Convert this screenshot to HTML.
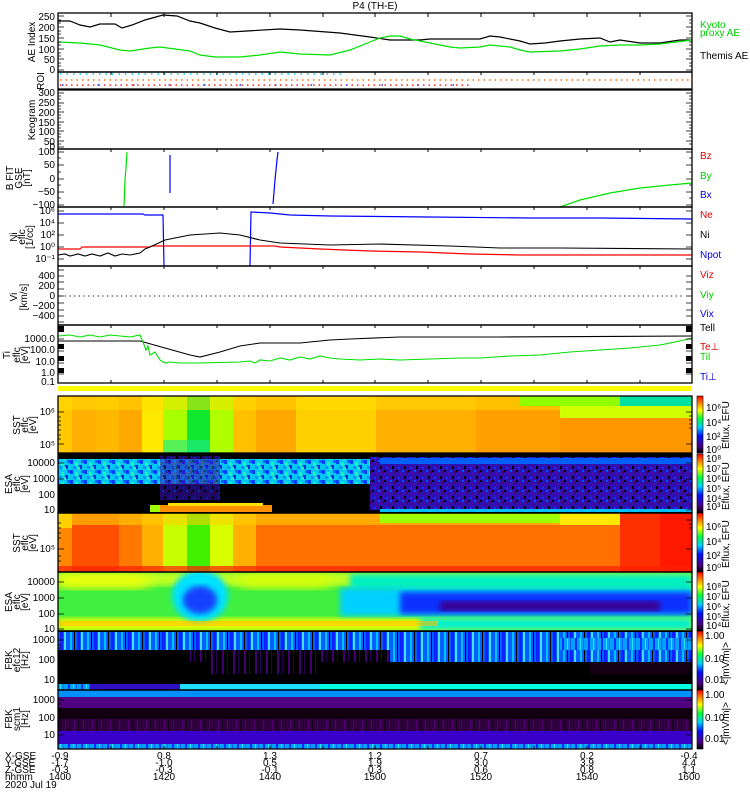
<!DOCTYPE html>
<html><head><meta charset="utf-8"><style>
html,body{margin:0;padding:0;background:#fff;width:750px;height:800px;overflow:hidden}
svg{display:block}
text{font-family:"Liberation Sans",sans-serif;font-size:10px}
.s{font-size:9px}
</style></head><body>
<svg width="750" height="800" viewBox="0 0 750 800" xmlns="http://www.w3.org/2000/svg">
<defs>
<linearGradient id="cb" x1="0" y1="1" x2="0" y2="0">
<stop offset="0" stop-color="#000"/><stop offset="0.12" stop-color="#4b0080"/><stop offset="0.3" stop-color="#0010ff"/><stop offset="0.45" stop-color="#00d0ff"/><stop offset="0.6" stop-color="#00ff40"/><stop offset="0.75" stop-color="#ffff00"/><stop offset="0.88" stop-color="#ff8000"/><stop offset="1" stop-color="#ff0000"/>
</linearGradient>
<pattern id="n1" width="14" height="10" patternUnits="userSpaceOnUse">
<rect width="14" height="10" fill="#00c8f0"/><rect x="0" y="0" width="3" height="4" fill="#0040ff"/><rect x="5" y="2" width="3" height="4" fill="#20f0b0"/><rect x="9" y="5" width="3" height="4" fill="#0030e0"/><rect x="3" y="6" width="3" height="3" fill="#0090ff"/><rect x="11" y="0" width="3" height="3" fill="#1060ff"/><rect x="7" y="7" width="3" height="3" fill="#30e0c0"/>
</pattern>
<pattern id="n2" width="12" height="10" patternUnits="userSpaceOnUse">
<rect width="12" height="10" fill="#3010b0"/><rect x="0" y="0" width="2" height="2" fill="#000"/><rect x="4" y="3" width="2" height="2" fill="#5a0090"/><rect x="8" y="6" width="2" height="3" fill="#000"/><rect x="2" y="7" width="2" height="2" fill="#1030ff"/><rect x="10" y="1" width="2" height="3" fill="#4a0070"/><rect x="6" y="0" width="2" height="2" fill="#0050ff"/>
</pattern>
<pattern id="st1" width="17" height="10" patternUnits="userSpaceOnUse">
<rect width="17" height="10" fill="#0060ff"/><rect x="2" width="2" height="10" fill="#00c0ff"/><rect x="6" width="1" height="10" fill="#000"/><rect x="9" width="3" height="10" fill="#1020ff"/><rect x="13" width="2" height="10" fill="#40e0ff"/>
</pattern>
<pattern id="st2" width="13" height="10" patternUnits="userSpaceOnUse">
<rect width="13" height="10" fill="#00a0ff"/><rect x="3" width="2" height="10" fill="#0030ff"/><rect x="8" width="1" height="10" fill="#30e0ff"/><rect x="11" width="1" height="10" fill="#1060ff"/>
</pattern>
<pattern id="st3" width="9" height="10" patternUnits="userSpaceOnUse">
<rect width="9" height="10" fill="#300040"/><rect x="2" width="1" height="10" fill="#500070"/><rect x="6" width="1" height="10" fill="#180020"/>
</pattern>
<pattern id="st4" width="11" height="10" patternUnits="userSpaceOnUse">
<rect width="11" height="10" fill="#000"/><rect x="2" width="2" height="10" fill="#400070"/><rect x="7" width="1" height="10" fill="#2a0050"/>
</pattern>
<filter id="bl"><feGaussianBlur stdDeviation="8"/></filter>
<filter id="bl2"><feGaussianBlur stdDeviation="3"/></filter>
<clipPath id="c12"><rect x="58" y="572" width="634" height="59"/></clipPath>
</defs>

<text x="375" y="9" text-anchor="middle">P4 (TH-E)</text>

<rect x="58" y="386" width="634" height="5" fill="#ffff00"/>
<!-- SST1 -->
<g>
<rect x="58" y="396" width="634" height="57" fill="#ffc000"/>
<rect x="58" y="396" width="14" height="57" fill="#ffc800"/>
<rect x="72" y="396" width="24" height="57" fill="#ffb000"/>
<rect x="96" y="396" width="23" height="57" fill="#ffb800"/>
<rect x="119" y="396" width="23" height="57" fill="#ffa800"/>
<rect x="142" y="396" width="21" height="57" fill="#ffe800"/>
<rect x="163" y="396" width="24" height="57" fill="#a8ff00"/>
<rect x="187" y="396" width="23" height="57" fill="#10e830"/>
<rect x="210" y="396" width="23" height="57" fill="#b0ff00"/>
<rect x="233" y="396" width="23" height="57" fill="#ffc000"/>
<rect x="256" y="396" width="40" height="57" fill="#ffa800"/>
<rect x="296" y="396" width="80" height="57" fill="#ffd000"/>
<rect x="376" y="396" width="100" height="57" fill="#ffb000"/>
<rect x="476" y="396" width="84" height="57" fill="#ffa000"/>
<rect x="560" y="396" width="132" height="57" fill="#ff9800"/>
<rect x="58" y="396" width="634" height="14" fill="#ffe000" opacity="0.5"/>
<rect x="520" y="396" width="172" height="10" fill="#90ff00"/>
<rect x="620" y="396" width="72" height="10" fill="#00e0a0"/>
<rect x="560" y="406" width="132" height="12" fill="#d0ff00"/>
<rect x="163" y="440" width="47" height="13" fill="#20e890" opacity="0.6"/>
</g>
<!-- ESA1 -->
<rect x="58" y="454" width="634" height="59" fill="#000"/>
<rect x="58" y="459" width="330" height="25" fill="url(#n1)"/>
<rect x="160" y="456" width="60" height="44" fill="url(#n2)" opacity="0.6"/>
<rect x="370" y="457" width="322" height="53" fill="url(#n2)"/>
<rect x="380" y="458" width="312" height="6" fill="#0060ff"/>
<rect x="380" y="509" width="312" height="3" fill="#00c0ff"/>
<rect x="150" y="505" width="122" height="7" fill="#ff9000"/>
<rect x="168" y="503" width="95" height="3" fill="#ffe000"/>
<rect x="150" y="505" width="10" height="7" fill="#a0ff00"/>
<!-- SST2 -->
<g>
<rect x="58" y="513" width="634" height="59" fill="#ff7000"/>
<rect x="58" y="513" width="14" height="59" fill="#ff8800"/>
<rect x="58" y="513" width="14" height="15" fill="#ffd000"/>
<rect x="72" y="513" width="47" height="59" fill="#ff5000"/>
<rect x="119" y="513" width="23" height="59" fill="#ff7800"/>
<rect x="142" y="513" width="21" height="59" fill="#ffb000"/>
<rect x="163" y="513" width="24" height="59" fill="#c8ff00"/>
<rect x="187" y="513" width="23" height="59" fill="#40f000"/>
<rect x="210" y="513" width="23" height="59" fill="#d8ff00"/>
<rect x="233" y="513" width="23" height="59" fill="#ffb000"/>
<rect x="58" y="513" width="634" height="12" fill="#ffd000" opacity="0.6"/>
<rect x="380" y="513" width="180" height="10" fill="#a0ff00"/>
<rect x="560" y="513" width="60" height="12" fill="#ffe800"/>
<rect x="620" y="513" width="72" height="59" fill="#ff3000"/>
<rect x="660" y="513" width="32" height="59" fill="#ff1800"/>
<rect x="58" y="566" width="634" height="6" fill="#ff2000" opacity="0.7"/>
</g>
<!-- ESA2 -->
<g clip-path="url(#c12)">
<rect x="58" y="572" width="634" height="59" fill="#40f040"/>
<rect x="58" y="572" width="634" height="14" fill="#c0ff20" filter="url(#bl2)"/>
<rect x="58" y="618" width="634" height="13" fill="#e8ff00" filter="url(#bl2)"/>
<rect x="350" y="574" width="342" height="16" fill="#00f0c0" filter="url(#bl2)"/>
<rect x="340" y="588" width="352" height="28" fill="#00d0ff" filter="url(#bl2)"/>
<rect x="400" y="592" width="292" height="22" fill="#1030ff" filter="url(#bl2)"/>
<rect x="440" y="601" width="220" height="10" fill="#3a0090" filter="url(#bl2)"/>
<rect x="420" y="618" width="272" height="12" fill="#00f0d0" filter="url(#bl2)"/>
<rect x="58" y="575" width="90" height="14" fill="#ffff00" filter="url(#bl)"/>
<rect x="240" y="575" width="90" height="14" fill="#e0ff00" filter="url(#bl)"/>
<ellipse cx="200" cy="596" rx="28" ry="26" fill="#00e0ff" filter="url(#bl2)"/>
<ellipse cx="200" cy="600" rx="17" ry="14" fill="#1840ff" filter="url(#bl2)"/>
<rect x="58" y="621" width="380" height="5" fill="#ffc000" opacity="0.6"/>
</g>
<!-- FBK1 -->
<rect x="58" y="631" width="634" height="59" fill="#000"/>
<rect x="58" y="632" width="634" height="6" fill="url(#st1)"/>
<rect x="58" y="638" width="634" height="12" fill="url(#st1)"/>
<rect x="560" y="638" width="132" height="12" fill="url(#st2)"/>
<rect x="190" y="650" width="200" height="12" fill="url(#st4)"/>
<rect x="390" y="650" width="302" height="12" fill="url(#st1)"/>
<rect x="210" y="662" width="110" height="12" fill="url(#st4)"/>
<rect x="590" y="662" width="100" height="12" fill="#150015"/>
<rect x="58" y="684" width="634" height="6" fill="url(#st2)"/>
<rect x="180" y="684" width="140" height="6" fill="#20e0ff"/>
<rect x="320" y="684" width="372" height="6" fill="#00ffe0"/>
<rect x="90" y="684" width="90" height="6" fill="#3010c0"/>
<!-- FBK2 -->
<rect x="58" y="690" width="634" height="7" fill="#0090ff"/>
<rect x="58" y="697" width="634" height="11" fill="#500080"/>
<rect x="58" y="708" width="634" height="11" fill="#100010"/>
<rect x="58" y="719" width="634" height="12" fill="url(#st3)"/>
<rect x="58" y="731" width="634" height="13" fill="#3800c8"/>
<rect x="58" y="744" width="634" height="5" fill="url(#st2)"/>

<!-- colorbars -->
<rect x="697" y="396" width="6" height="57" fill="url(#cb)" stroke="#000" stroke-width="0.6"/>
<rect x="697" y="454" width="6" height="59" fill="url(#cb)" stroke="#000" stroke-width="0.6"/>
<rect x="697" y="513" width="6" height="59" fill="url(#cb)" stroke="#000" stroke-width="0.6"/>
<rect x="697" y="572" width="6" height="59" fill="url(#cb)" stroke="#000" stroke-width="0.6"/>
<rect x="697" y="631" width="6" height="59" fill="url(#cb)" stroke="#000" stroke-width="0.6"/>
<rect x="697" y="690" width="6" height="59" fill="url(#cb)" stroke="#000" stroke-width="0.6"/>
<g>
<text x="706" y="411" font-size="7">10⁶</text><text x="706" y="426" font-size="7">10⁴</text><text x="706" y="440" font-size="7">10²</text><text x="706" y="453" font-size="7">10⁰</text>
<text x="706" y="462" font-size="7">10⁸</text><text x="706" y="472" font-size="7">10⁷</text><text x="706" y="482" font-size="7">10⁶</text><text x="706" y="492" font-size="7">10⁵</text><text x="706" y="502" font-size="7">10⁴</text><text x="706" y="510" font-size="7">10³</text>
<text x="706" y="530" font-size="7">10⁶</text><text x="706" y="545" font-size="7">10⁴</text><text x="706" y="559" font-size="7">10²</text><text x="706" y="571" font-size="7">10⁰</text>
<text x="706" y="590" font-size="7">10⁸</text><text x="706" y="600" font-size="7">10⁷</text><text x="706" y="610" font-size="7">10⁶</text><text x="706" y="620" font-size="7">10⁵</text><text x="706" y="629" font-size="7">10⁴</text>
<text x="705" y="639" font-size="7">1.00</text><text x="705" y="662" font-size="7">0.10</text><text x="705" y="683" font-size="7">0.01</text>
<text x="705" y="698" font-size="7">1.00</text><text x="705" y="721" font-size="7">0.10</text><text x="705" y="742" font-size="7">0.01</text>
</g>
<g>
<text transform="translate(729,449) rotate(-90)" font-size="8">Eflux, EFU</text>
<text transform="translate(729,510) rotate(-90)" font-size="8">Eflux, EFU</text>
<text transform="translate(729,568) rotate(-90)" font-size="8">Eflux, EFU</text>
<text transform="translate(729,628) rotate(-90)" font-size="8">Eflux, EFU</text>
<text transform="translate(729,685) rotate(-90)" font-size="8">&lt;|mV/m|&gt;</text>
<text transform="translate(729,745) rotate(-90)" font-size="8">&lt;|mV/m|&gt;</text>
</g>

<!-- Line plots -->
<g fill="none" stroke-width="1.2">
<polyline stroke="#000" points="58,21 70,21 80,25 90,27 100,24 115,24 122,28 132,25 145,20 163,15 177,16 190,21 200,23 215,28 230,32 247,31 280,29 300,30 340,33 370,37 390,40 420,40 430,39 480,39 490,36 500,37 520,41 530,44 545,43 560,41 580,39 600,38 610,42 620,40 640,43 660,43 680,40 692,40"/>
<polyline stroke="#00e000" points="58,42 80,43 100,45 120,50 130,51 150,48 160,47 175,49 190,51 200,55 215,57 240,57 260,55 280,52 300,54 330,55 350,50 370,42 380,38 390,36 400,36 410,39 420,41 430,43 450,47 460,48 480,47 490,45 500,46 510,47 520,50 530,52 560,51 580,49 600,46 620,45 640,45 660,44 692,40"/>
</g>
<line x1="60" y1="74" x2="345" y2="74" stroke="#00d0e0" stroke-width="1.5" stroke-dasharray="1.5,5"/>
<line x1="60" y1="80" x2="692" y2="80" stroke="#ff7000" stroke-width="1.5" stroke-dasharray="1.5,4"/>
<line x1="60" y1="85" x2="470" y2="85" stroke="#ff2020" stroke-width="1.5" stroke-dasharray="1.5,4"/>
<line x1="62" y1="85" x2="470" y2="85" stroke="#2040ff" stroke-width="1.5" stroke-dasharray="1.5,34"/>
<polyline fill="none" stroke="#00e000" stroke-width="1.2" points="124,206 125,180 126,168 127,152"/>
<line x1="170" y1="155" x2="170" y2="193" stroke="#0000ff" stroke-width="1.2"/>
<polyline fill="none" stroke="#0000ff" stroke-width="1.2" points="273,204 275,180 277,160 278,152"/>
<polyline fill="none" stroke="#00e000" stroke-width="1.2" points="560,207 580,200 610,193 640,188 670,185 692,183"/>
<polyline fill="none" stroke="#0000ff" stroke-width="1.2" points="58,214 143,214 145,215 163,215 164,266"/>
<polyline fill="none" stroke="#0000ff" stroke-width="1.2" points="250,266 251,212 270,213 290,215 330,216 430,217 530,218 600,218 692,219"/>
<polyline fill="none" stroke="#ff0000" stroke-width="1.2" points="58,249 80,249 82,247 150,247 152,246 250,246 275,246 280,247 320,249 370,251 420,252 470,254 520,255 692,255"/>
<polyline fill="none" stroke="#000" stroke-width="1.1" points="58,255 65,254 70,256 78,254 85,256 92,254 100,256 108,253 115,256 122,254 130,255 140,253 145,249 150,247 165,240 190,235 220,233 240,235 260,240 280,243 330,245 380,244 450,246 500,248 560,248 692,249"/>
<line x1="60" y1="296" x2="684" y2="296" stroke="#000" stroke-width="1" stroke-dasharray="1.2,3.5"/>
<polyline fill="none" stroke="#000" stroke-width="1.1" points="58,341 140,341 165,348 190,355 200,357 220,352 240,346 260,343 300,343 330,340 350,339 400,337 500,337 692,336"/>
<polyline fill="none" stroke="#00e000" stroke-width="1.1" points="58,336 70,335 80,337 90,335 100,337 110,335 120,336 130,337 140,335 143,342 146,350 148,346 150,355 155,352 160,360 165,363 170,362 180,363 200,363 240,362 250,361 255,363 260,360 270,361 280,358 290,360 300,357 310,359 320,356 330,358 340,359 360,360 380,359 400,360 430,359 460,358 480,358 510,356 540,355 570,352 600,350 630,348 660,345 680,341 692,338"/>

<g fill="none" stroke="#000" stroke-width="1.3">
<rect x="58" y="13" width="634" height="59"/>
<rect x="58" y="72" width="634" height="17"/>
<rect x="58" y="90" width="634" height="59"/>
<rect x="58" y="149" width="634" height="58"/>
<rect x="58" y="207" width="634" height="59"/>
<rect x="58" y="266" width="634" height="59"/>
<rect x="58" y="325" width="634" height="58"/>
<rect x="58" y="396" width="634" height="57"/>
<rect x="58" y="454" width="634" height="59"/>
<rect x="58" y="513" width="634" height="59"/>
<rect x="58" y="572" width="634" height="59"/>
<rect x="58" y="631" width="634" height="59"/>
<rect x="58" y="690" width="634" height="59"/>
</g>
<g stroke="#000" stroke-width="1">
<path d="M111,13v4M164,13v4M217,13v4M270,13v4M323,13v4M375,13v4M428,13v4M481,13v4M534,13v4M587,13v4M640,13v4
M111,72v3M164,72v3M217,72v3M270,72v3M323,72v3M375,72v3M428,72v3M481,72v3M534,72v3M587,72v3M640,72v3
M111,149v3M164,149v3M217,149v3M270,149v3M323,149v3M375,149v3M428,149v3M481,149v3M534,149v3M587,149v3M640,149v3
M111,207v3M164,207v3M217,207v3M270,207v3M323,207v3M375,207v3M428,207v3M481,207v3M534,207v3M587,207v3M640,207v3
M111,266v3M164,266v3M217,266v3M270,266v3M323,266v3M375,266v3M428,266v3M481,266v3M534,266v3M587,266v3M640,266v3
M111,325v3M164,325v3M217,325v3M270,325v3M323,325v3M375,325v3M428,325v3M481,325v3M534,325v3M587,325v3M640,325v3
M111,383v-3M164,383v-3M217,383v-3M270,383v-3M323,383v-3M375,383v-3M428,383v-3M481,383v-3M534,383v-3M587,383v-3M640,383v-3
M111,749v-3M164,749v-3M217,749v-3M270,749v-3M323,749v-3M375,749v-3M428,749v-3M481,749v-3M534,749v-3M587,749v-3M640,749v-3"/>
</g>
<g stroke="#000" stroke-width="0.8">
<path d="M58,16h6M58,27h6M58,38h6M58,49h6M58,59h6M58,70h6M692,16h-6M692,27h-6M692,38h-6M692,49h-6M692,59h-6M692,70h-6
M58,20h3M58,23h3M58,31h3M58,34h3M58,42h3M58,45h3M58,53h3M58,56h3M58,63h3M58,66h3M692,20h-3M692,23h-3M692,31h-3M692,34h-3M692,42h-3M692,45h-3M692,53h-3M692,56h-3M692,63h-3M692,66h-3
M58,93h6M58,103h6M58,112h6M58,122h6M58,131h6M58,141h6M58,147h6M692,93h-6M692,103h-6M692,112h-6M692,122h-6M692,131h-6M692,141h-6
M58,96h3M58,99h3M58,106h3M58,109h3M58,115h3M58,118h3M58,125h3M58,128h3M58,134h3M58,137h3M58,144h3M692,96h-3M692,99h-3M692,106h-3M692,109h-3M692,115h-3M692,118h-3M692,125h-3M692,128h-3M692,134h-3M692,137h-3M692,144h-3
M58,152h6M58,165h6M58,179h6M58,192h6M58,205h6M692,152h-6M692,165h-6M692,179h-6M692,192h-6M692,205h-6
M58,158h3M58,172h3M58,185h3M58,198h3M692,158h-3M692,172h-3M692,185h-3M692,198h-3
M58,211h6M58,223h6M58,235h6M58,247h6M58,259h6M692,211h-6M692,223h-6M692,235h-6M692,247h-6M692,259h-6
M58,270h6M58,276h6M58,282h6M58,289h6M58,296h6M58,303h6M58,310h6M58,316h6M58,322h6M692,276h-6M692,282h-6M692,289h-6M692,296h-6M692,303h-6M692,310h-6M692,316h-6
M58,339h6M58,351h6M58,363h6M58,374h6M692,339h-6M692,351h-6M692,363h-6M692,374h-6
M58,412h6M58,444h6M58,417h3M58,421h3M58,425h3M58,430h3M58,435h3M58,439h3M692,412h-6M692,416h-3M692,420h-3M692,424h-3M692,428h-3M692,444h-6
M58,463h6M58,479h6M58,495h6M58,510h6M692,463h-6M692,479h-6M692,495h-6M692,510h-6
M58,549h6M58,523h3M58,528h3M58,533h3M58,538h3M58,556h3M58,561h3M692,520h-6M692,524h-3M692,528h-3M692,549h-6
M58,582h6M58,598h6M58,614h6M58,629h6M692,582h-6M692,598h-6M692,614h-6M692,629h-6
M58,640h6M58,660h6M58,680h6M58,645h3M58,648h3M58,651h3M692,640h-6M692,660h-6M692,680h-6
M58,700h6M58,718h6M58,735h6M58,704h3M58,708h3M58,711h3M58,724h3M58,727h3M692,700h-6M692,718h-6M692,735h-6M692,722h-3M692,726h-3"/>
</g>
<g fill="#000"><rect x="58" y="326" width="6" height="6"/><rect x="58" y="344" width="6" height="5"/><rect x="58" y="356" width="6" height="5"/><rect x="58" y="368" width="6" height="5"/><rect x="686" y="326" width="6" height="6"/><rect x="686" y="344" width="6" height="5"/><rect x="686" y="356" width="6" height="5"/><rect x="686" y="368" width="6" height="5"/></g>

<g text-anchor="end" font-size="10">
<text x="55" y="20">250</text><text x="55" y="31">200</text><text x="55" y="42">150</text><text x="55" y="53">100</text><text x="55" y="63">50</text><text x="55" y="73">0</text>
<text x="55" y="96">300</text><text x="55" y="106">250</text><text x="55" y="116">200</text><text x="55" y="126">150</text><text x="55" y="135">100</text><text x="55" y="145">50</text><text x="55" y="150">0</text>
<text x="55" y="155">100</text><text x="55" y="168">50</text><text x="55" y="182">0</text><text x="55" y="195">−50</text><text x="55" y="208">−100</text>
<text x="55" y="214">10⁶</text><text x="55" y="226">10⁴</text><text x="55" y="238">10²</text><text x="55" y="250">10⁰</text><text x="55" y="262">10⁻¹</text>
<text x="55" y="279">400</text><text x="55" y="289">200</text><text x="55" y="299">0</text><text x="55" y="309">−200</text><text x="55" y="319">−400</text>
<text x="55" y="342">1000.0</text><text x="55" y="353">100.0</text><text x="55" y="365">10.0</text><text x="55" y="376">1.0</text><text x="55" y="385">0.1</text>
<text x="55" y="415">10⁶</text><text x="55" y="448">10⁵</text>
<text x="55" y="466">10000</text><text x="55" y="482">1000</text><text x="55" y="498">100</text><text x="55" y="513">10</text>
<text x="55" y="552">10⁵</text>
<text x="55" y="585">10000</text><text x="55" y="601">1000</text><text x="55" y="617">100</text><text x="55" y="632">10</text>
<text x="55" y="643">1000</text><text x="55" y="663">100</text><text x="55" y="683">10</text>
<text x="55" y="703">1000</text><text x="55" y="721">100</text><text x="55" y="738">10</text>
</g>
<g font-size="9" text-anchor="middle">
<text transform="translate(35,42) rotate(-90)">AE Index</text>
<text transform="translate(44,81) rotate(-90)">ROI</text>
<text transform="translate(35,120) rotate(-90)">Keogram</text>
<text transform="translate(13,178) rotate(-90)">B FIT</text>
<text transform="translate(22,178) rotate(-90)">GSE</text>
<text transform="translate(30,178) rotate(-90)">[nT]</text>
<text transform="translate(17,237) rotate(-90)">Ni</text>
<text transform="translate(25,237) rotate(-90)">eflc</text>
<text transform="translate(33,237) rotate(-90)">[1/cc]</text>
<text transform="translate(17,297) rotate(-90)">Vi</text>
<text transform="translate(27,297) rotate(-90)">[km/s]</text>
<text transform="translate(10,355) rotate(-90)">Ti</text>
<text transform="translate(20,355) rotate(-90)">eflc</text>
<text transform="translate(28,355) rotate(-90)">[eV]</text>
<text transform="translate(20,425) rotate(-90)">SST</text><text transform="translate(28,425) rotate(-90)">eflc</text><text transform="translate(36,425) rotate(-90)">[eV]</text>
<text transform="translate(12,484) rotate(-90)">ESA</text><text transform="translate(20,484) rotate(-90)">eflc</text><text transform="translate(28,484) rotate(-90)">[eV]</text>
<text transform="translate(20,543) rotate(-90)">SST</text><text transform="translate(28,543) rotate(-90)">eflc</text><text transform="translate(36,543) rotate(-90)">[eV]</text>
<text transform="translate(12,602) rotate(-90)">ESA</text><text transform="translate(20,602) rotate(-90)">eflc</text><text transform="translate(28,602) rotate(-90)">[eV]</text>
<text transform="translate(12,660) rotate(-90)">FBK</text><text transform="translate(20,660) rotate(-90)">efc12</text><text transform="translate(28,660) rotate(-90)">[Hz]</text>
<text transform="translate(12,719) rotate(-90)">FBK</text><text transform="translate(20,719) rotate(-90)">scm1</text><text transform="translate(28,719) rotate(-90)">[Hz]</text>
</g>
<g font-size="9">
<text x="700" y="28" fill="#00d000">Kyoto</text><text x="700" y="36" fill="#00d000">proxy AE</text>
<text x="700" y="59" fill="#000">Themis AE</text>
<text x="700" y="159" fill="#e00000">Bz</text><text x="700" y="179" fill="#00d000">By</text><text x="700" y="198" fill="#0000e0">Bx</text>
<text x="700" y="218" fill="#e00000">Ne</text><text x="700" y="238" fill="#000">Ni</text><text x="700" y="258" fill="#0000e0">Npot</text>
<text x="700" y="278" fill="#e00000">Viz</text><text x="700" y="298" fill="#00d000">Viy</text><text x="700" y="317" fill="#0000e0">Vix</text>
<text x="700" y="331" fill="#000">Tell</text><text x="700" y="350" fill="#e00000">Te⊥</text><text x="700" y="360" fill="#00d000">Til</text><text x="700" y="380" fill="#0000e0">Ti⊥</text>
</g>
<g font-size="8.5">
<text x="5" y="759">X-GSE</text><text x="5" y="766">Y-GSE</text><text x="5" y="773">Z-GSE</text><text x="5" y="780">hhmm</text><text x="5" y="788">2020 Jul 19</text>
</g>
<g font-size="8.5" text-anchor="middle">
<text x="60" y="759">-0.9</text><text x="60" y="766">-1.7</text><text x="60" y="773">-0.3</text><text x="60" y="780">1400</text>
<text x="164" y="759">0.8</text><text x="164" y="766">-1.0</text><text x="164" y="773">-0.3</text><text x="164" y="780">1420</text>
<text x="270" y="759">1.3</text><text x="270" y="766">0.5</text><text x="270" y="773">-0.1</text><text x="270" y="780">1440</text>
<text x="375" y="759">1.2</text><text x="375" y="766">1.9</text><text x="375" y="773">0.3</text><text x="375" y="780">1500</text>
<text x="481" y="759">0.7</text><text x="481" y="766">3.0</text><text x="481" y="773">0.6</text><text x="481" y="780">1520</text>
<text x="587" y="759">0.2</text><text x="587" y="766">3.9</text><text x="587" y="773">0.8</text><text x="587" y="780">1540</text>
<text x="689" y="759">-0.4</text><text x="689" y="766">4.4</text><text x="689" y="773">1.1</text><text x="689" y="780">1600</text>
</g>
</svg>
</body></html>
